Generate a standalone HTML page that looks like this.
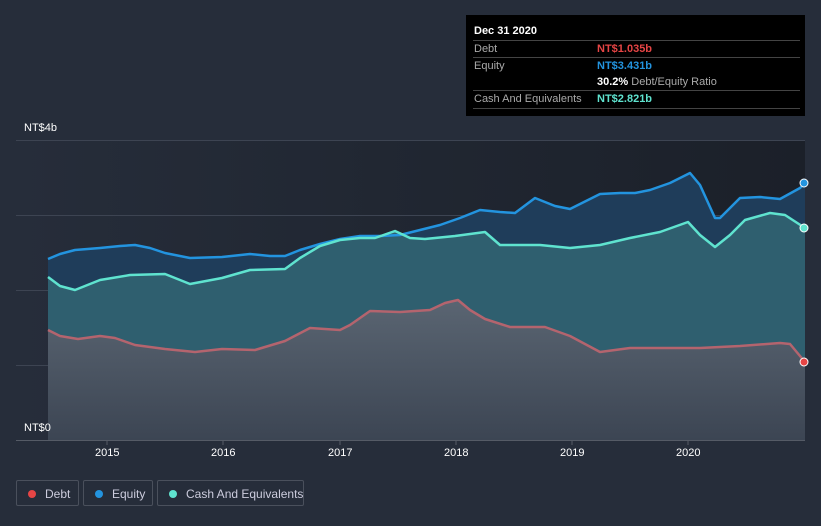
<!DOCTYPE html>
<html><head><style>
body{margin:0;width:821px;height:526px;background:#262d3a;font-family:"Liberation Sans",sans-serif;overflow:hidden;position:relative}
.tt{position:absolute;left:466px;top:15px;width:339px;height:101px;background:#000;color:#aaa;font-size:11px}
.tt .h{position:absolute;left:8px;top:10px;color:#fff;font-weight:bold}
.row{position:absolute;left:7px;width:327px;border-top:1px solid #444;height:17px}
.row span{position:absolute;top:2px;white-space:nowrap}
.lg{position:absolute;top:480px;height:26px;border:1px solid #4a505c;border-radius:2px;color:#ccd;font-size:12px;line-height:26px;box-sizing:border-box;white-space:nowrap}
.lg i{position:absolute;left:11px;top:9px;width:8px;height:8px;border-radius:50%}
.lg span{position:absolute;left:28px;white-space:nowrap}
.ax{position:absolute;color:#fff;font-size:11px}
</style></head><body>
<svg width="821" height="526" style="position:absolute;left:0;top:0">
<defs><linearGradient id="bg" x1="0" x2="1"><stop offset="0" stop-color="#262d3a"/><stop offset="1" stop-color="#1b2029"/></linearGradient>
<linearGradient id="dg" x1="0" y1="0" x2="0" y2="1"><stop offset="0" stop-color="#5a6572"/><stop offset="1" stop-color="#3c4553"/></linearGradient></defs>
<rect x="16" y="140" width="789" height="300" fill="url(#bg)"/>
<g stroke="#3d4452" stroke-width="1"><line x1="16" y1="140.5" x2="805" y2="140.5"/><line x1="16" y1="215.5" x2="805" y2="215.5"/><line x1="16" y1="290.5" x2="805" y2="290.5"/><line x1="16" y1="365.5" x2="805" y2="365.5"/><line x1="16" y1="440.5" x2="805" y2="440.5" stroke="#555b66"/></g>
<g stroke="#555b66"><line x1="107" y1="440" x2="107" y2="445"/><line x1="223" y1="440" x2="223" y2="445"/><line x1="340" y1="440" x2="340" y2="445"/><line x1="456" y1="440" x2="456" y2="445"/><line x1="572" y1="440" x2="572" y2="445"/><line x1="688" y1="440" x2="688" y2="445"/></g>
<polygon fill="#1f3d5a" points="48,440 48,259 60,254 75,250 100,248 120,246 135,245 150,248 165,253 190,258 222,257 250,254 270,256 285,256 300,250 320,244 340,239 360,236 380,236 400,235 420,230 440,225 460,218 480,210 500,212 515,213 535,198 555,206 570,209 580,204 600,194 620,193 635,193 650,190 670,183 690,173 700,185 715,218 720,218 740,198 760,197 780,199 800,188 805,183 805,440"/>
<polygon fill="#2f5f6f" points="48,440 48,277 60,286 75,290 100,280 130,275 165,274 190,284 222,278 250,270 285,269 300,258 320,246 340,240 360,238 375,238 395,231 410,238 425,239 455,236 485,232 500,245 540,245 570,248 600,245 630,238 660,232 688,222 700,235 715,247 730,235 745,220 770,213 785,215 805,228 805,440"/>
<polygon fill="url(#dg)" points="48,440 48,330 60,336 78,339 100,336 115,338 135,345 165,349 195,352 222,349 255,350 285,341 310,328 340,330 350,325 370,311 400,312 430,310 445,303 458,300 470,310 485,319 510,327 545,327 570,336 600,352 630,348 670,348 700,348 740,346 780,343 790,344 805,362 805,440"/>
<g fill="none" stroke-width="2.5" stroke-linejoin="round">
<polyline stroke="#2394df" points="48,259 60,254 75,250 100,248 120,246 135,245 150,248 165,253 190,258 222,257 250,254 270,256 285,256 300,250 320,244 340,239 360,236 380,236 400,235 420,230 440,225 460,218 480,210 500,212 515,213 535,198 555,206 570,209 580,204 600,194 620,193 635,193 650,190 670,183 690,173 700,185 715,218 720,218 740,198 760,197 780,199 800,188 805,183"/>
<polyline stroke="#5fe3cf" points="48,277 60,286 75,290 100,280 130,275 165,274 190,284 222,278 250,270 285,269 300,258 320,246 340,240 360,238 375,238 395,231 410,238 425,239 455,236 485,232 500,245 540,245 570,248 600,245 630,238 660,232 688,222 700,235 715,247 730,235 745,220 770,213 785,215 805,228"/>
<polyline stroke="#b4646e" points="48,330 60,336 78,339 100,336 115,338 135,345 165,349 195,352 222,349 255,350 285,341 310,328 340,330 350,325 370,311 400,312 430,310 445,303 458,300 470,310 485,319 510,327 545,327 570,336 600,352 630,348 670,348 700,348 740,346 780,343 790,344 805,362"/>
</g>
<circle cx="804" cy="183" r="4" fill="#2394df" stroke="#fff" stroke-width="1"/>
<circle cx="804" cy="228" r="4" fill="#5fe3cf" stroke="#fff" stroke-width="1"/>
<circle cx="804" cy="362" r="4" fill="#e64545" stroke="#fff" stroke-width="1"/>
</svg>
<div class="ax" style="left:24px;top:122px">NT$4b</div>
<div class="ax" style="left:24px;top:422px">NT$0</div>
<div class="ax" style="left:95px;top:447px">2015</div>
<div class="ax" style="left:211px;top:447px">2016</div>
<div class="ax" style="left:328px;top:447px">2017</div>
<div class="ax" style="left:444px;top:447px">2018</div>
<div class="ax" style="left:560px;top:447px">2019</div>
<div class="ax" style="left:676px;top:447px">2020</div>
<div class="tt"><div class="h">Dec 31 2020</div>
<div class="row" style="top:25px"><span style="left:1px">Debt</span><span style="left:124px;color:#e64545;font-weight:bold">NT$1.035b</span></div>
<div class="row" style="top:42px"><span style="left:1px">Equity</span><span style="left:124px;color:#2394df;font-weight:bold">NT$3.431b</span></div>
<div class="row" style="top:59px;border-top:none"><span style="left:124px"><b style="color:#fff">30.2%</b> Debt/Equity Ratio</span></div>
<div class="row" style="top:75px;height:17px;border-bottom:1px solid #444"><span style="left:1px">Cash And Equivalents</span><span style="left:124px;color:#5fe3cf;font-weight:bold">NT$2.821b</span></div>
</div>
<div class="lg" style="left:16px;width:63px"><i style="background:#e64545"></i><span>Debt</span></div>
<div class="lg" style="left:83px;width:70px"><i style="background:#2394df"></i><span>Equity</span></div>
<div class="lg" style="left:157px;width:147px"><i style="background:#5fe3cf"></i><span>Cash And Equivalents</span></div>
</body></html>
